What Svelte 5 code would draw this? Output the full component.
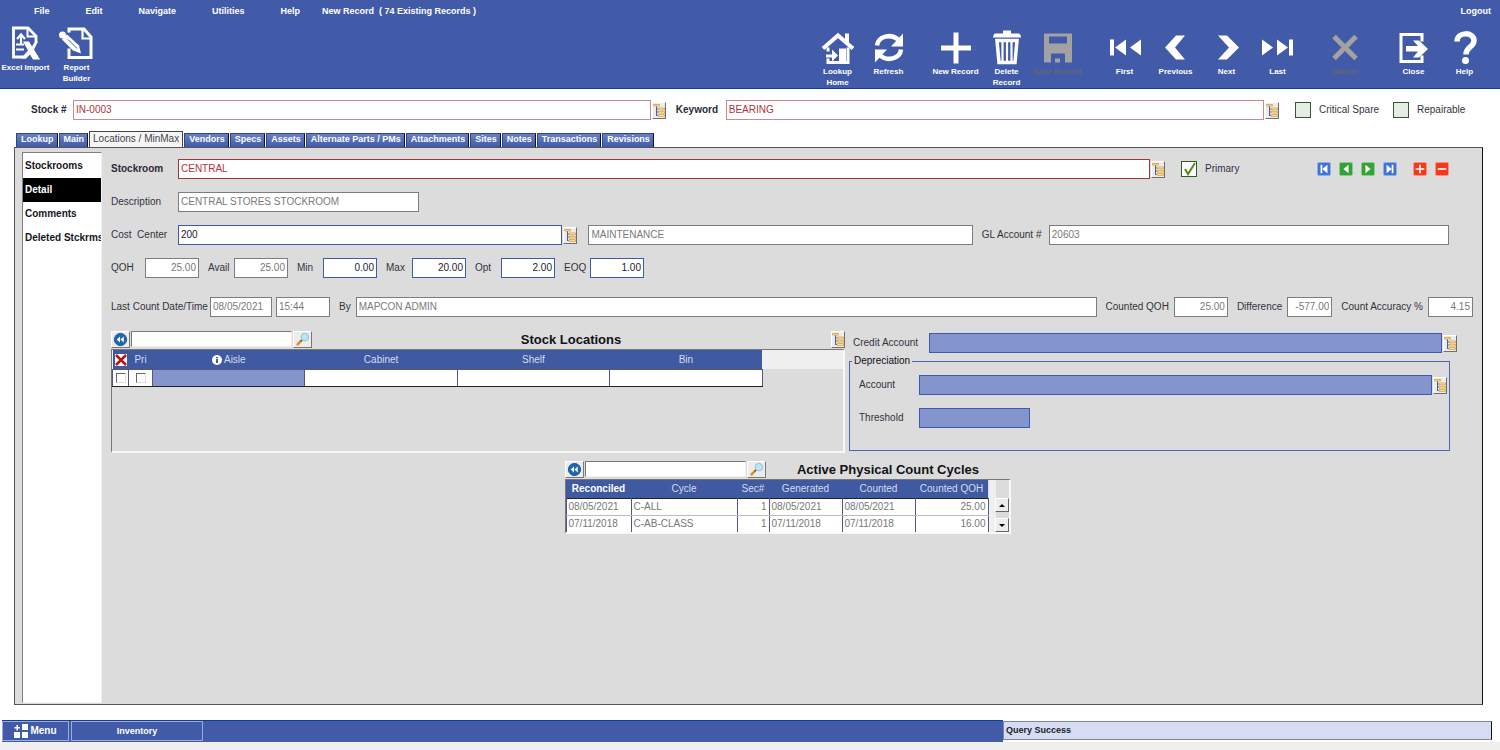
<script>
    const menus = ['File', 'Edit', 'Navigate', 'Utilities', 'Help'];

    const leftTools = [
        { label: 'Excel Import', icon: 'excel' },
        { label: 'Report\nBuilder', icon: 'report' }
    ];

    const toolGroups = [
        [
            { label: 'Lookup\nHome', icon: 'home' },
            { label: 'Refresh', icon: 'refresh' }
        ],
        [
            { label: 'New Record', icon: 'plus' },
            { label: 'Delete\nRecord', icon: 'trash' },
            { label: 'Save Record', icon: 'save', disabled: true }
        ],
        [
            { label: 'First', icon: 'first' },
            { label: 'Previous', icon: 'prev' },
            { label: 'Next', icon: 'next' },
            { label: 'Last', icon: 'last' }
        ],
        [{ label: 'Cancel', icon: 'cancel', disabled: true }],
        [
            { label: 'Close', icon: 'close' },
            { label: 'Help', icon: 'help' }
        ]
    ];

    const tabs = [
        'Lookup', 'Main', 'Locations / MinMax', 'Vendors', 'Specs', 'Assets', 'Alternate Parts / PMs',
        'Attachments', 'Sites', 'Notes', 'Transactions', 'Revisions'
    ];
    let activeTab = $state('Locations / MinMax');

    const sections = ['Stockrooms', 'Detail', 'Comments', 'Deleted Stckrms'];
    let activeSection = $state('Detail');

    const quantities = [
        { label: 'QOH', value: '25.00', readonly: true },
        { label: 'Avail', value: '25.00', readonly: true },
        { label: 'Min', value: '0.00' },
        { label: 'Max', value: '20.00' },
        { label: 'Opt', value: '2.00' },
        { label: 'EOQ', value: '1.00' }
    ];

    const recordNav = ['first', 'prev', 'next', 'last'];

    const cycles = [
        { reconciled: '08/05/2021', cycle: 'C-ALL', sec: 1, generated: '08/05/2021', counted: '08/05/2021', qoh: '25.00' },
        { reconciled: '07/11/2018', cycle: 'C-AB-CLASS', sec: 1, generated: '07/11/2018', counted: '07/11/2018', qoh: '16.00' }
    ];
</script>

{#snippet toolIcon(name)}
    <svg class="tool-icon" viewBox="0 0 36 36" aria-hidden="true">
        {#if name === 'excel'}
            <path d="M5.500 1v30.500H18M4 2.500h16l8 8V17" fill="none" stroke="currentColor" stroke-width="2.800" />
            <path d="M19.500 2v9h8" fill="none" stroke="currentColor" stroke-width="2" />
            <path d="M13 19V9M9 13.500 13 9l4 4.500M8 19h8M8 24h8" fill="none" stroke="currentColor" stroke-width="2.200" />
            <path d="M15 16h6l3 5 3-5h3l-4 8 6 10h-7l-3-5-4 4h-5l7-8z" fill="currentColor" />
        {:else if name === 'report'}
            <path d="M10 7V3.500h15l7 8V32H10V23" fill="none" stroke="currentColor" stroke-width="3" />
            <path d="M23.500 3v10h9" fill="none" stroke="currentColor" stroke-width="2.200" />
            <circle cx="3.500" cy="9.500" r="3.500" fill="currentColor" />
            <path d="m3 14 5-5 12 11 2 8-8-3z" fill="currentColor" />
            <path d="m9 14 9 9" stroke="#425ba9" stroke-width="1" />
        {:else if name === 'home'}
            <path d="M3 19 18 6l15 13" fill="none" stroke="currentColor" stroke-width="4" />
            <path d="M25 4h4v9h-4z" fill="currentColor" />
            <path d="M8 18v4M8 29v4h20V18" fill="none" stroke="currentColor" stroke-width="3" />
            <path d="M19 19h7v14h-7zM12 20l6 6-6 6v-4H6v-3h6z" fill="currentColor" />
        {:else if name === 'refresh'}
            <path d="M6 16C7 7 20 3 28 11M30 20C29 29 16 33 8 25" fill="none" stroke="currentColor" stroke-width="4.500" />
            <path d="M32 4v13H20zM4 33V20h12z" fill="currentColor" />
        {:else if name === 'plus'}
            <path d="M18 3v31M3 18.500h30" stroke="currentColor" stroke-width="5" />
        {:else if name === 'trash'}
            <path d="M14 1h8v3h8q2 1 2 4H4q0-3 2-4h8z" fill="currentColor" />
            <path d="M8 11h20l-2 22H10z" fill="none" stroke="currentColor" stroke-width="3.500" />
            <path d="M13.500 12v20M18 12v20M22.500 12v20" stroke="currentColor" stroke-width="2.200" />
        {:else if name === 'save'}
            <path d="M4 4h28v29H4zM9 7v7h18V7zM11 24v9h14v-9z" fill="currentColor" fill-rule="evenodd" />
            <path d="M15 29h5v4h-5z" fill="currentColor" />
        {:else if name === 'first'}
            <path d="M3 10h4v16H3zM19 10v16L8 18zM34 10v16L23 18z" fill="currentColor" />
        {:else if name === 'prev'}
            <path d="M18 6h9l-10 12 10 12h-9L7 18z" fill="currentColor" />
        {:else if name === 'next'}
            <path d="M18 6H9l11 12L9 30h9l12-12z" fill="currentColor" />
        {:else if name === 'last'}
            <path d="M33 10h-4v16h4zM17 10v16l11-8zM2 10v16l11-8z" fill="currentColor" />
        {:else if name === 'cancel'}
            <path d="m7 7 22 22M29 7 7 29" stroke="currentColor" stroke-width="5" />
        {:else if name === 'close'}
            <path d="M26 12V5H5v27h21v-6" fill="none" stroke="currentColor" stroke-width="3" />
            <path d="M10 16.500h12l-5-5.500h6l9 8.500-9 8.500h-6l5-6H10z" fill="currentColor" />
        {:else if name === 'help'}
            <path d="M10 12c0-10 17-10 17-1 0 7-8 6-8 14" fill="none" stroke="currentColor" stroke-width="5.500" />
            <circle cx="18.500" cy="31" r="3.500" fill="currentColor" />
        {/if}
    </svg>
{/snippet}

{#snippet tool(item)}
    <button type="button" class="tool" disabled={item.disabled}>
        {@render toolIcon(item.icon)}
        <span>{item.label}</span>
    </button>
{/snippet}

{#snippet treeButton(label)}
    <button type="button" class="tree" aria-label={label}>
        <svg viewBox="0 0 12 15" aria-hidden="true">
            <path d="M3.500 3v10M3.500 6H6M3.500 9H6M3.500 12.500H6" fill="none" stroke="#3c62b8" />
            <path d="M.5 1.500h6V3h-6zM5 5h6.500v1.800H5zM5 8.300h6.500v1.800H5zM5 11.600h6.500v1.800H5z" fill="#fbe9c4" stroke="#dba64a" stroke-width="0.900" />
        </svg>
    </button>
{/snippet}

{#snippet searchBar(label)}
    <div class="search">
        <button type="button" aria-label="Reset {label}">
            <svg viewBox="0 0 16 16" aria-hidden="true">
                <circle cx="8" cy="8" r="6.500" fill="#1c68b4" stroke="#134f91" />
                <path d="M7.500 4.800v6.400L4 8zM11.500 4.800v6.400L8 8z" fill="#fff" />
            </svg>
        </button>
        <input type="text" aria-label="Search {label}" />
        <button type="button" aria-label="Find {label}">
            <svg viewBox="0 0 16 16" aria-hidden="true">
                <path d="m2 14 5-5" stroke="#e08a1c" stroke-width="2.500" />
                <path d="m6 10 2-2" stroke="#555" stroke-width="1.500" />
                <circle cx="10.500" cy="5.500" r="4" fill="#bfe6f8" stroke="#8cbbd6" />
            </svg>
        </button>
    </div>
{/snippet}

<div class="page">
    <header>
        <div class="menu-bar">
            <nav>
                {#each menus as menu}
                    <button type="button">{menu}</button>
                {/each}
            </nav>
            <span class="record-info">New Record &nbsp;( 74 Existing Records )</span>
            <button type="button" class="logout">Logout</button>
        </div>
        <div class="toolbar">
            <div class="tool-group">
                {#each leftTools as item}
                    {@render tool(item)}
                {/each}
            </div>
            <div class="tool-groups">
                {#each toolGroups as group}
                    <div class="tool-group">
                        {#each group as item}
                            {@render tool(item)}
                        {/each}
                    </div>
                {/each}
            </div>
        </div>
    </header>

    <div class="key-row">
        <label class="strong stock-label" for="stock">Stock #</label>
        <input id="stock" class="field required soft grow-stock" type="text" value="IN-0003" />
        {@render treeButton('Look up stock number')}
        <label class="strong keyword-label" for="keyword">Keyword</label>
        <input id="keyword" class="field required soft grow-keyword" type="text" value="BEARING" />
        {@render treeButton('Look up keyword')}
        <label class="check critical"><input type="checkbox" />Critical Spare</label>
        <label class="check repairable"><input type="checkbox" />Repairable</label>
    </div>

    <div class="tabs" role="tablist">
        {#each tabs as tab}
            <button
                type="button"
                role="tab"
                class:active={tab === activeTab}
                aria-selected={tab === activeTab}
                onclick={() => (activeTab = tab)}
            >{tab}</button>
        {/each}
    </div>

    <main>
        <nav class="sections">
            {#each sections as section}
                <button
                    type="button"
                    class:active={section === activeSection}
                    onclick={() => (activeSection = section)}
                >{section}</button>
            {/each}
        </nav>

        <div class="content">
            <div class="row stockroom-row">
                <label class="strong lead" for="stockroom">Stockroom</label>
                <input id="stockroom" class="field required grow" type="text" value="CENTRAL" />
                {@render treeButton('Look up stockroom')}
                <label class="check primary"><input type="checkbox" checked />Primary</label>
                <div class="record-nav">
                    {#each recordNav as name}
                        <button type="button" class={name} aria-label="{name} stockroom">
                            <svg viewBox="0 0 14 14" aria-hidden="true">
                                {#if name === 'first'}
                                    <path d="M3 2h2v10H3zM11 2v10L5 7z" />
                                {:else if name === 'prev'}
                                    <path d="M10 2v10L4 7z" />
                                {:else if name === 'next'}
                                    <path d="M4 2v10l6-5z" />
                                {:else}
                                    <path d="M9 2h2v10H9zM3 2v10l6-5z" />
                                {/if}
                            </svg>
                        </button>
                    {/each}
                </div>
                <div class="record-nav edit">
                    <button type="button" aria-label="Add stockroom">
                        <svg viewBox="0 0 14 14" aria-hidden="true"><path d="M6 2h2v4h4v2H8v4H6V8H2V6h4z" /></svg>
                    </button>
                    <button type="button" aria-label="Remove stockroom">
                        <svg viewBox="0 0 14 14" aria-hidden="true"><path d="M2 6h10v2H2z" /></svg>
                    </button>
                </div>
            </div>

            <div class="row">
                <label class="lead" for="description">Description</label>
                <input id="description" class="field description" type="text" value="CENTRAL STORES STOCKROOM" readonly />
            </div>

            <div class="row cost-row">
                <label class="lead" for="cost-center">Cost &nbsp;Center</label>
                <input id="cost-center" class="field grow" type="text" value="200" />
                {@render treeButton('Look up cost center')}
                <input class="field grow cost-name" type="text" value="MAINTENANCE" aria-label="Cost center name" readonly />
                <label class="gl-label" for="gl">GL Account #</label>
                <input id="gl" class="field grow-gl" type="text" value="20603" readonly />
            </div>

            <div class="row quantities">
                {#each quantities as item}
                    <label>
                        <span>{item.label}</span>
                        <input class="field number" type="text" value={item.value} readonly={item.readonly} />
                    </label>
                {/each}
            </div>

            <div class="row count-row">
                <label class="count-label" for="count-date">Last Count Date/Time</label>
                <input id="count-date" class="field date" type="text" value="08/05/2021" readonly />
                <input class="field time" type="text" value="15:44" aria-label="Last count time" readonly />
                <label class="spaced" for="count-by">By</label>
                <input id="count-by" class="field grow" type="text" value="MAPCON ADMIN" readonly />
                <label class="spaced" for="counted">Counted QOH</label>
                <input id="counted" class="field number" type="text" value="25.00" readonly />
                <label class="spaced" for="difference">Difference</label>
                <input id="difference" class="field number short" type="text" value="-577.00" readonly />
                <label class="spaced" for="accuracy">Count Accuracy %</label>
                <input id="accuracy" class="field number short" type="text" value="4.15" readonly />
            </div>

            <div class="panels">
                <section class="locations">
                    <div class="grid-bar">
                        {@render searchBar('locations')}
                        <h2>Stock Locations</h2>
                        {@render treeButton('Look up location')}
                    </div>
                    <div class="grid-box">
                        <div class="grid-head-fill">
                            <table class="location-table">
                                <thead>
                                    <tr>
                                        <th class="col-delete">
                                            <svg viewBox="0 0 14 14" role="img" aria-label="Delete">
                                                <path d="M1 1h12v12H1z" fill="#fff" />
                                                <path d="m2 2 10 10M12 2 2 12" stroke="#b3161b" stroke-width="2.500" />
                                            </svg>
                                        </th>
                                        <th class="col-pri">Pri</th>
                                        <th>
                                            <svg class="info" viewBox="0 0 10 10" aria-hidden="true">
                                                <circle cx="5" cy="5" r="5" fill="#fff" />
                                                <path d="M4 4h2v4H4zM4 2h2v1.300H4z" fill="#3f5aa1" />
                                            </svg>
                                            Aisle
                                        </th>
                                        <th>Cabinet</th>
                                        <th>Shelf</th>
                                        <th>Bin</th>
                                    </tr>
                                </thead>
                                <tbody>
                                    <tr>
                                        <td><input type="checkbox" aria-label="Delete row" /></td>
                                        <td><input type="checkbox" aria-label="Primary location" /></td>
                                        <td class="focused"></td>
                                        <td></td>
                                        <td></td>
                                        <td></td>
                                    </tr>
                                </tbody>
                            </table>
                        </div>
                    </div>
                </section>

                <section class="accounts">
                    <div class="row credit-row">
                        <label for="credit">Credit Account</label>
                        <input id="credit" class="field filled grow" type="text" />
                        {@render treeButton('Look up credit account')}
                    </div>
                    <fieldset>
                        <legend>Depreciation</legend>
                        <div class="row">
                            <label for="account">Account</label>
                            <input id="account" class="field filled grow" type="text" />
                            {@render treeButton('Look up depreciation account')}
                        </div>
                        <div class="row">
                            <label for="threshold">Threshold</label>
                            <input id="threshold" class="field filled threshold" type="text" />
                        </div>
                    </fieldset>
                </section>
            </div>

            <section class="cycles">
                <div class="grid-bar">
                    {@render searchBar('cycles')}
                    <h2>Active Physical Count Cycles</h2>
                </div>
                <div class="cycle-box">
                    <table class="cycle-table">
                        <thead>
                            <tr>
                                <th class="sorted w-date">Reconciled</th>
                                <th class="w-cycle">Cycle</th>
                                <th class="w-sec">Sec#</th>
                                <th>Generated</th>
                                <th>Counted</th>
                                <th>Counted QOH</th>
                            </tr>
                        </thead>
                        <tbody>
                            {#each cycles as row}
                                <tr>
                                    <td>{row.reconciled}</td>
                                    <td>{row.cycle}</td>
                                    <td class="num">{row.sec}</td>
                                    <td>{row.generated}</td>
                                    <td>{row.counted}</td>
                                    <td class="num">{row.qoh}</td>
                                </tr>
                            {/each}
                        </tbody>
                    </table>
                    <div class="scroller">
                        <button type="button" aria-label="Scroll up">
                            <svg viewBox="0 0 8 8" aria-hidden="true"><path d="M1 6h6L4 3z" /></svg>
                        </button>
                        <button type="button" aria-label="Scroll down">
                            <svg viewBox="0 0 8 8" aria-hidden="true"><path d="M1 3h6L4 6z" /></svg>
                        </button>
                    </div>
                </div>
            </section>
        </div>
    </main>

    <footer>
        <div class="taskbar">
            <button type="button" class="menu-button">
                <svg viewBox="0 0 14 14" aria-hidden="true">
                    <path d="M8 0h6v6H8zM0 8h6v6H0zM8 8h6v6H8zM2.500 1h1.500v2H6v1.500H4V6.500H2.500v-2h-2V3h2z" fill="#fff" />
                </svg>
                Menu
            </button>
            <button type="button" class="task">Inventory</button>
        </div>
        <output>Query Success</output>
    </footer>
</div>

<style>
    :global(body) {
        background: #efefef;
    }

    .page {
        display: flex;
        flex-direction: column;
        box-sizing: border-box;
        min-height: 100vh;
        padding-bottom: 8px;
        font-family: "Liberation Sans", Arial, sans-serif;
        font-size: 10px;
        line-height: 12px;
        color: #33333d;
        background: linear-gradient(#fff, #fff) no-repeat 0 0 / 100% calc(100% - 8px);
    }

    button,
    input {
        box-sizing: border-box;
        margin: 0;
        padding: 0;
        border: 0;
        border-radius: 0;
        font: inherit;
        color: inherit;
    }

    button {
        background: none;
        cursor: pointer;
    }

    svg {
        display: block;
    }

    /* Header */
    header {
        box-sizing: border-box;
        color: #fff;
        font-weight: bold;
        background: #425ba9;
        border-bottom: 1px solid #0c3f9f;
    }

    .menu-bar {
        display: flex;
        align-items: center;
        gap: 22px;
        height: 22px;
        padding: 0 9px 0 34px;
        font-size: 9px;
    }

    .menu-bar nav {
        display: flex;
        gap: 36px;
    }

    .record-info {
        white-space: nowrap;
    }

    .logout {
        margin-left: auto;
    }

    .toolbar {
        display: flex;
        justify-content: space-between;
        height: 66px;
        padding-right: 10px;
    }

    .tool-groups {
        display: flex;
        gap: 16px;
        padding-top: 7px;
    }

    .tool-group {
        display: flex;
    }

    .tool-groups .tool-group:last-child {
        margin-left: 2px;
    }

    .toolbar > .tool-group {
        padding-top: 3px;
    }

    .tool {
        display: flex;
        flex-direction: column;
        align-items: center;
        width: 51px;
        font-size: 8px;
        line-height: 11px;
        white-space: pre;
    }

    .tool:disabled {
        color: #63666f;
    }

    .tool:disabled svg {
        color: #a2a2a2;
    }

    .tool-icon {
        width: 36px;
        height: 37px;
    }

    /* Fields */
    .strong {
        font-weight: bold;
        color: #2b2b38;
    }

    label {
        white-space: nowrap;
    }

    .field {
        height: 20px;
        min-width: 0;
        padding: 0 2px 2px;
        color: #222233;
        background: #fff;
        border: 1px solid #3c5bb0;
    }

    .field[readonly] {
        color: #7a7a7a;
        border-color: #7d7d7d;
    }

    .field.required {
        color: #ae343c;
        border-color: #a8323a;
    }

    .field.required.soft {
        border-color: #c88a8e;
    }

    .field.filled {
        background: #8395cc;
    }

    .field.number {
        width: 54px;
        text-align: right;
    }

    .field.number.short {
        width: 45px;
    }

    .tree {
        flex: none;
        width: 14px;
        height: 17px;
        margin-left: 1px;
        background: #ececec;
        border: 1px solid #fff;
        border-right-color: #6f6f6f;
        border-bottom-color: #6f6f6f;
    }

    .tree svg {
        width: 12px;
        height: 15px;
    }

    .check {
        display: flex;
        align-items: center;
        gap: 8px;
    }

    .check input {
        flex: none;
        appearance: none;
        width: 16px;
        height: 16px;
        background: #e6ede4;
        border: 1px solid #2e5a2c;
    }

    .check input:checked {
        background: #fff url("data:image/svg+xml,%3Csvg xmlns='http://www.w3.org/2000/svg' viewBox='0 0 14 14'%3E%3Cpath d='M3 7l3 5 7-11' fill='none' stroke='%23548a1c' stroke-width='2'/%3E%3C/svg%3E");
    }

    /* Record key */
    .key-row {
        display: flex;
        align-items: center;
        padding: 11px 34px 11px 31px;
    }

    .stock-label {
        width: 42px;
    }

    .grow-stock {
        flex: 578 1 0;
    }

    .keyword-label {
        width: 50px;
        margin-left: 10px;
    }

    .grow-keyword {
        flex: 538 1 0;
    }

    .critical {
        width: 84px;
        margin-left: 16px;
    }

    .repairable {
        width: 73px;
        margin-left: 14px;
    }

    /* Tabs */
    .tabs {
        display: flex;
        align-items: flex-end;
        gap: 1px;
        height: 16px;
        padding-left: 16px;
    }

    .tabs button {
        height: 14px;
        padding: 0 3px 2px 4px;
        font-size: 9px;
        font-weight: bold;
        line-height: 11px;
        color: #fff;
        white-space: nowrap;
        background: linear-gradient(#6880c6, #425ba9);
        border: 1px solid #37457a;
        border-bottom: 0;
        border-right-color: #0b1238;
    }

    .tabs button.active {
        height: 16px;
        padding: 0 3px 3px;
        font-size: 10px;
        font-weight: normal;
        color: #44444c;
        background: #f5f5f5;
        border-color: #444;
    }

    /* Body */
    main {
        display: flex;
        flex: 1;
        margin: 0 17px 15px 14px;
        padding: 4px 0 1px 7px;
        background: #dcdcdc;
        border: 1px solid #55555a;
        border-right-color: #10101c;
    }

    .sections {
        display: flex;
        flex: none;
        flex-direction: column;
        box-sizing: border-box;
        width: 80px;
        padding-top: 1px;
        overflow: hidden;
        background: #fff;
        border: 1px solid #808080;
        border-right-color: #f4f4f4;
        border-bottom-color: #f4f4f4;
    }

    .sections button {
        flex: none;
        width: 100%;
        height: 24px;
        padding: 0 2px;
        font-weight: bold;
        color: #16161c;
        text-align: left;
        white-space: nowrap;
    }

    .sections button.active {
        color: #fff;
        background: #000;
    }

    .content {
        flex: 1;
        min-width: 0;
        padding: 7px 9px 0 9px;
    }

    .row {
        display: flex;
        align-items: center;
        margin-bottom: 13px;
    }

    .grow {
        flex: 24 1 0;
    }

    .grow-gl {
        flex: 25 1 0;
    }

    .lead {
        width: 67px;
    }

    .stockroom-row,
    .cost-row {
        padding-right: 24px;
    }

    .primary {
        width: 136px;
        margin-left: 16px;
    }

    .record-nav {
        display: flex;
        gap: 8px;
    }

    .record-nav.edit {
        margin-left: 16px;
    }

    .record-nav button {
        width: 14px;
        height: 14px;
        background: #3f73d2;
        border: 1px solid #8fafe6;
        border-radius: 2px;
    }

    .record-nav .prev,
    .record-nav .next {
        background: #35a136;
        border-color: #8acb8a;
    }

    .record-nav.edit button {
        background: #f8371a;
        border-color: #f79482;
    }

    .record-nav svg {
        fill: #fff;
    }

    .description {
        width: 241px;
    }

    .cost-name {
        margin-left: 11px;
    }

    .gl-label {
        width: 67px;
        margin-left: 9px;
    }

    .quantities {
        gap: 9px;
        margin-bottom: 19px;
    }

    .quantities label {
        display: flex;
        align-items: center;
    }

    .quantities span {
        width: 26px;
    }

    .quantities label:first-child span {
        width: 34px;
    }

    .count-label {
        width: 99px;
    }

    .date {
        width: 62px;
    }

    .time {
        width: 54px;
        margin-left: 4px;
    }

    .spaced {
        padding: 0 5px 0 9px;
    }

    /* Grids */
    .panels {
        display: flex;
        gap: 4px;
        padding-right: 16px;
    }

    .locations {
        flex: 734 1 0;
        min-width: 0;
    }

    .grid-bar {
        display: flex;
        align-items: center;
        height: 19px;
    }

    h2 {
        flex: 1;
        margin: 0;
        font-size: 13px;
        line-height: 16px;
        color: #111118;
        text-align: center;
        white-space: nowrap;
    }

    .search {
        display: flex;
        gap: 1px;
    }

    .search button {
        display: flex;
        justify-content: center;
        width: 19px;
        height: 17px;
        background: #ececec;
        border: 1px solid #fff;
        border-right-color: #777;
        border-bottom-color: #777;
    }

    .search svg {
        width: 15px;
        height: 15px;
    }

    .search input {
        width: 161px;
        height: 16px;
        background: #fff;
        border: 1px solid #777;
        border-right-color: #eee;
        border-bottom-color: #eee;
    }

    .grid-box {
        box-sizing: border-box;
        height: 104px;
        border: 1px solid #777;
        border-right: 2px solid #f8f8f8;
        border-bottom: 2px solid #f8f8f8;
    }

    .grid-head-fill {
        background: linear-gradient(#efefef, #efefef) no-repeat 0 0 / 100% 19px;
    }

    table {
        table-layout: fixed;
        border-collapse: collapse;
    }

    th {
        padding: 0;
        font-weight: normal;
        color: #d5dcf0;
        background: #3f5aa1;
    }

    td {
        padding: 0;
        background: #fff;
        border: 1px solid #8c8fa3;
    }

    .location-table {
        width: 89%;
    }

    .location-table th {
        height: 19px;
    }

    .location-table td {
        height: 16px;
        border-color: #55587a;
        border-bottom-color: #222;
    }

    .location-table td.focused {
        background: #8395cc;
    }

    .location-table td input {
        display: block;
        appearance: none;
        width: 10px;
        height: 10px;
        margin: 0 auto;
        background: #fff;
        border: 1px solid #666;
        border-right-color: #ddd;
        border-bottom-color: #ddd;
    }

    .location-table .col-delete {
        width: 16px;
    }

    .col-pri {
        width: 24px;
    }

    .col-delete svg {
        width: 14px;
        height: 14px;
        margin: 0 auto;
    }

    .info {
        display: inline-block;
        width: 10px;
        height: 10px;
        vertical-align: -2px;
    }

    .accounts {
        flex: 608 1 0;
        min-width: 0;
        padding-top: 3px;
    }

    .credit-row {
        margin-bottom: 2px;
    }

    .credit-row label {
        width: 76px;
        padding-left: 4px;
    }

    fieldset {
        box-sizing: border-box;
        height: 96px;
        min-width: 0;
        margin: 0 7px 0 0;
        padding: 8px 2px 0 9px;
        border: 1px solid #4c67b3;
    }

    fieldset label {
        width: 60px;
    }

    legend {
        margin-left: -7px;
        padding: 0 2px;
        color: #111118;
    }

    .threshold {
        width: 111px;
    }

    .cycles {
        width: 446px;
        margin: 7px auto 16px;
        padding-right: 9px;
    }

    .cycle-box {
        display: flex;
        box-sizing: border-box;
        border: 1px solid #777;
        border-right: 2px solid #f8f8f8;
        border-bottom: 2px solid #f8f8f8;
    }

    .cycle-table {
        width: 423px;
    }

    .cycle-table th {
        height: 18px;
    }

    .cycle-table th.sorted {
        font-weight: bold;
        color: #fff;
    }

    .cycle-table td {
        height: 16px;
        padding: 0 2px;
        color: #777;
        border-color: #55587a;
        border-top-color: #bbb;
    }

    .cycle-table tbody tr:first-child td {
        border-top-color: #222;
        border-bottom-color: #bbb;
    }

    .cycle-table tbody tr:last-child td {
        border-bottom: 0;
    }

    .cycle-table .num {
        text-align: right;
    }

    .w-date {
        width: 65px;
    }

    .w-cycle {
        width: 106px;
    }

    .w-sec {
        width: 32px;
    }

    .scroller {
        display: flex;
        flex: 1;
        flex-direction: column;
        align-items: flex-end;
        justify-content: space-between;
        padding-top: 18px;
        background: linear-gradient(90deg, #efefef 7px, #dcdcdc 7px);
    }

    .scroller button {
        display: flex;
        align-items: center;
        justify-content: center;
        width: 14px;
        height: 14px;
        background: #ececec;
        border: 1px solid #fff;
        border-right-color: #666;
        border-bottom-color: #666;
    }

    .scroller svg {
        width: 8px;
        height: 8px;
    }

    /* Footer */
    footer {
        display: flex;
        height: 22px;
        padding: 0 8px 0 2px;
        font-weight: bold;
    }

    .taskbar {
        display: flex;
        flex: 1005 1 0;
        gap: 2px;
        color: #fff;
        background: #425ba9;
        border-top: 1px solid #0c3f9f;
    }

    .taskbar button {
        display: flex;
        align-items: center;
        justify-content: center;
        gap: 2px;
        height: 20px;
        border: 1px solid #9eabd6;
    }

    .menu-button {
        width: 67px;
    }

    .menu-button svg {
        width: 14px;
        height: 14px;
    }

    .task {
        width: 132px;
        font-size: 9px;
    }

    output {
        flex: 485 1 0;
        box-sizing: border-box;
        height: 19px;
        margin-top: 1px;
        padding: 2px;
        font-size: 9px;
        color: #22222c;
        background: #d5dcf4;
        border: 1px solid #7c869f;
        border-right-color: #10101c;
    }
</style>
